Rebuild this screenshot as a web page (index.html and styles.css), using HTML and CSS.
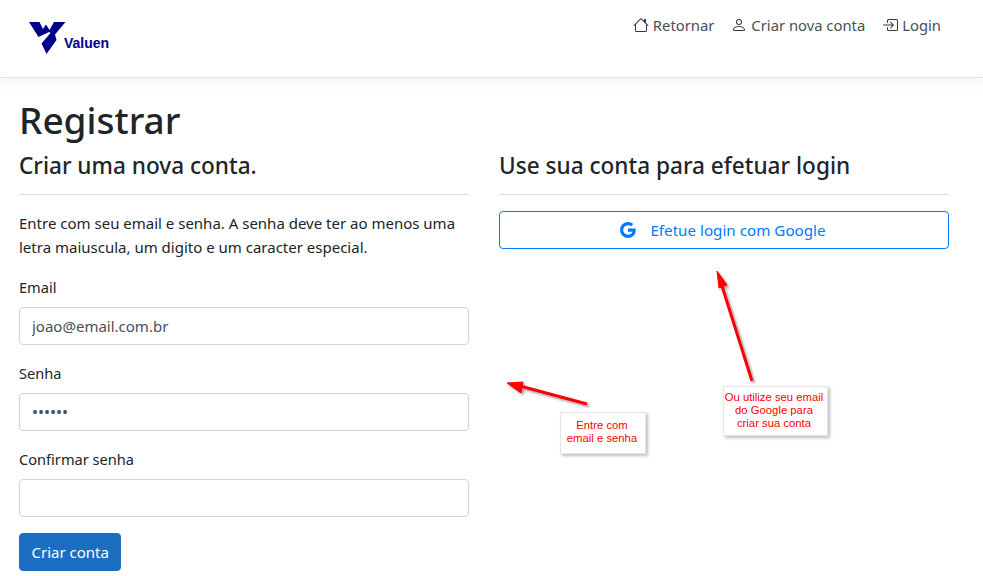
FILE: index.html
```html
<!DOCTYPE html>
<html lang="pt-BR">
<head>
<meta charset="utf-8">
<title>Registrar</title>
<link rel="stylesheet" href="styles.css">
</head>
<body>
<header class="topbar">
  <a class="brand" href="#">
    <svg class="brand-mark" width="38" height="33" viewBox="0 0 38 33"><path d="M0 0H10.5L14 7 17 2.500 20.500 8 25 0H36.500L26 12.500 27.500 18 17.500 32 12.500 21.500 21.500 11 20 10 9.500 15Z" fill="#00008b"/></svg>
    <span class="brand-name">Valuen</span>
  </a>
  <nav class="nav">
    <a class="nav-link" href="#"><svg class="icon" viewBox="0 0 16 16"><path d="M8.707 1.5a1 1 0 0 0-1.414 0L.646 8.146a.5.5 0 0 0 .708.708L2 8.207V13.5A1.5 1.5 0 0 0 3.5 15h9a1.5 1.5 0 0 0 1.5-1.5V8.207l.646.647a.5.5 0 0 0 .708-.708L13 5.793V2.5a.5.5 0 0 0-.5-.5h-1a.5.5 0 0 0-.5.5v1.293L8.707 1.5ZM13 7.207V13.5a.5.5 0 0 1-.5.5h-9a.5.5 0 0 1-.5-.5V7.207l5-5 5 5Z"/></svg>Retornar</a>
    <a class="nav-link" href="#"><svg class="icon" viewBox="0 0 16 16"><path d="M8 8a3 3 0 1 0 0-6 3 3 0 0 0 0 6Zm2-3a2 2 0 1 1-4 0 2 2 0 0 1 4 0Zm4 8c0 1-1 1-1 1H3s-1 0-1-1 1-4 6-4 6 3 6 4Zm-1-.004c-.001-.246-.154-.986-.832-1.664C11.516 10.68 10.289 10 8 10c-2.29 0-3.516.68-4.168 1.332-.678.678-.83 1.418-.832 1.664h10Z"/></svg>Criar nova conta</a>
    <a class="nav-link" href="#"><svg class="icon" viewBox="0 0 16 16"><path d="M6 3.5a.5.5 0 0 1 .5-.5h8a.5.5 0 0 1 .5.5v9a.5.5 0 0 1-.5.5h-8a.5.5 0 0 1-.5-.5v-2a.5.5 0 0 0-1 0v2A1.5 1.5 0 0 0 6.5 14h8a1.5 1.5 0 0 0 1.5-1.5v-9A1.5 1.5 0 0 0 14.5 2h-8A1.5 1.5 0 0 0 5 3.5v2a.5.5 0 0 0 1 0v-2z"/><path d="M11.854 8.354a.5.5 0 0 0 0-.708l-3-3a.5.5 0 1 0-.708.708L10.293 7.5H1.5a.5.5 0 0 0 0 1h8.793l-2.147 2.146a.5.5 0 0 0 .708.708l3-3z"/></svg>Login</a>
  </nav>
</header>
<main class="page">
  <h1 class="title">Registrar</h1>
  <div class="columns">
    <section class="col">
      <h2 class="subtitle">Criar uma nova conta.</h2>
      <hr class="rule">
      <p class="intro">Entre com seu email e senha. A senha deve ter ao menos uma letra maiuscula, um digito e um caracter especial.</p>
      <div class="field"><label class="label" for="email">Email</label><input class="input" id="email" type="text" value="joao@email.com.br"></div>
      <div class="field"><label class="label" for="senha">Senha</label><input class="input input-pass" id="senha" type="password" value="123456"></div>
      <div class="field"><label class="label" for="conf">Confirmar senha</label><input class="input" id="conf" type="password"></div>
      <button class="btn-primary" type="button">Criar conta</button>
    </section>
    <section class="col">
      <h2 class="subtitle">Use sua conta para efetuar login</h2>
      <hr class="rule">
      <button class="btn-google" type="button"><svg class="g-icon" viewBox="0 0 16 16"><path d="M15.545 6.558a9.42 9.42 0 0 1 .139 1.626c0 2.434-.87 4.492-2.384 5.885h.002C11.978 15.292 10.158 16 8 16A8 8 0 1 1 8 0a7.689 7.689 0 0 1 5.352 2.082l-2.284 2.284A4.347 4.347 0 0 0 8 3.166c-2.087 0-3.86 1.408-4.492 3.304a4.792 4.792 0 0 0 0 3.063h.003c.635 1.893 2.405 3.301 4.492 3.301 1.078 0 2.004-.276 2.722-.764h-.003a3.702 3.702 0 0 0 1.599-2.431H8v-3.08h7.545z"/></svg>Efetue login com Google</button>
    </section>
  </div>
</main>
<svg class="arrows" width="983" height="576" viewBox="0 0 983 576">
  <defs><filter id="sh" x="-30%" y="-30%" width="160%" height="160%"><feDropShadow dx="2" dy="2" stdDeviation="1" flood-color="#000" flood-opacity=".35"/></filter></defs>
  <g filter="url(#sh)" fill="#f00" stroke="#f00">
    <path d="M587 404 520 386" stroke-width="3" fill="none"/>
    <path d="M507 383 523 382 521 393Z" stroke-width="1"/>
    <path d="M752 381 722 286" stroke-width="3" fill="none"/>
    <path d="M717 271 727 285 719 288Z" stroke-width="1"/>
  </g>
</svg>
<div class="note note-left">Entre com<br>email e senha</div>
<div class="note note-right">Ou utilize seu email<br>do Google para<br>criar sua conta</div>
</body>
</html>
```
FILE: styles.css
```css
* { box-sizing: border-box; }
html, body { margin: 0; height: 576px; overflow: hidden; }
body {
  position: relative;
  background: #fff;
  color: #212529;
  font-family: "Noto Sans", "Open Sans", sans-serif;
  font-size: 15px;
  line-height: 24px;
}
a { text-decoration: none; }
.topbar {
  height: 78px;
  display: flex;
  justify-content: space-between;
  align-items: flex-start;
  padding: 0 42px 0 29px;
  border-bottom: 1px solid #e0e0e0;
  box-shadow: 0 4px 12px rgba(0,0,0,.05);
}
.brand { display: flex; align-items: flex-start; padding-top: 22px; }
.brand-name {
  font-family: "Liberation Sans", Arial, sans-serif;
  font-size: 14px;
  font-weight: 700;
  color: #00008b;
  line-height: 16px;
  margin: 13px 0 0 -3px;
}
.nav { display: flex; gap: 17px; padding-top: 13px; font-size: 14.8px; }
.nav-link { display: flex; align-items: center; gap: 4px; color: #495057; }
.icon { width: 16px; height: 16px; fill: #343a40; }
.page { padding: 0 34px 0 19px; }
.title { margin: 18px 0 8px; font-size: 37px; font-weight: 500; line-height: 48px; }
.columns { display: grid; grid-template-columns: 450px 450px; column-gap: 30px; }
.subtitle { margin: -1px 0 1px; font-size: 22.6px; font-weight: 500; line-height: 29px; }
.rule { margin: 14px 0 16px; border: 0; border-top: 1px solid #dfdfdf; }
.intro { margin: 0 0 16px; }
.field { margin-bottom: 16px; }
.label { display: block; margin-bottom: 8px; font-size: 14.6px; line-height: 24px; }
.input {
  display: block;
  width: 100%;
  height: 38px;
  padding: 6px 12px;
  border: 1px solid #ced4da;
  border-radius: 4px;
  font: inherit;
  color: #495057;
  background: #fff;
}
.input-pass { font-size: 16px; }
.btn-primary {
  display: block;
  height: 38px;
  padding: 0 11.5px;
  border: 1px solid #1b6ec2;
  border-radius: 4px;
  background: #1b6ec2;
  color: #fff;
  font: inherit;
}
.btn-google {
  display: flex;
  align-items: center;
  justify-content: center;
  gap: 14px;
  width: 100%;
  height: 38px;
  padding: 0 2px 0 0;
  border: 1px solid #007bff;
  border-radius: 4px;
  background: #fff;
  color: #007bff;
  font: inherit;
  font-size: 15.2px;
}
.g-icon { width: 16px; height: 16px; fill: #007bff; }
.arrows { position: absolute; left: 0; top: 0; pointer-events: none; }
.note {
  position: absolute;
  background: #fff;
  border: 1px solid #e6e6e6;
  box-shadow: 2px 2px 3px rgba(0,0,0,.25);
  color: #f00;
  font-family: "Liberation Sans", Arial, sans-serif;
  font-size: 11.3px;
  line-height: 13px;
  text-align: center;
  white-space: nowrap;
}
.note-left { left: 560px; top: 412px; width: 86px; height: 42px; padding: 6px 2px 0 0; }
.note-right { left: 723px; top: 386px; width: 105px; height: 50px; padding: 4px 3px 0 0; }
```
